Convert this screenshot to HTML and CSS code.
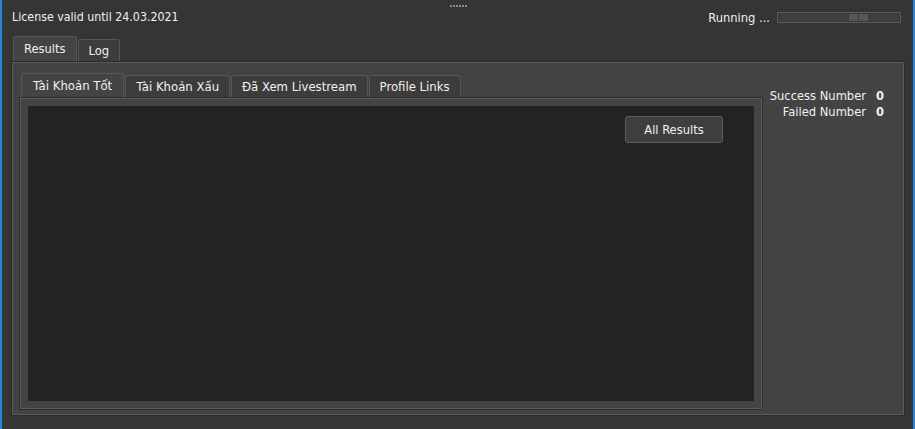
FILE: index.html
```html
<!DOCTYPE html>
<html lang="vi">

<head>
  <meta charset="UTF-8" />
  <title>Results</title>
  <link rel="stylesheet" href="styles.css">
</head>

<body>
  <div class="window">
    <div class="grip"></div>

    <div class="topbar">
      <span class="license">License valid until 24.03.2021</span>
      <div class="status">
        <span>Running ...</span>
        <div class="progress">
          <i></i><i></i><i></i><i></i><i></i><i></i><i></i><i class="on"></i><i class="on"></i><i></i><i></i><i></i>
        </div>
      </div>
    </div>

    <div class="tabs">
      <div class="tab active">Results</div>
      <div class="tab">Log</div>
    </div>

    <div class="panel">
      <div class="left">
        <div class="subtabs">
          <div class="subtab active">Tài Khoản Tốt</div>
          <div class="subtab">Tài Khoản Xấu</div>
          <div class="subtab">Đã Xem Livestream</div>
          <div class="subtab">Profile Links</div>
        </div>
        <div class="subpanel">
          <div class="results">
            <button class="btn">All Results</button>
          </div>
        </div>
      </div>

      <div class="stats">
        <div class="row"><span>Success Number</span><b>0</b></div>
        <div class="row"><span>Failed Number</span><b>0</b></div>
      </div>
    </div>
  </div>
</body>

</html>
```

FILE: styles.css
```css
* {
  box-sizing: border-box;
  margin: 0;
  padding: 0;
}

body {
  width: 915px;
  height: 429px;
  background: #353535;
  font-family: "DejaVu Sans Condensed", "DejaVu Sans", sans-serif;
  font-size: 12.8px;
  color: #f0f0f0;
  overflow: hidden;
}

.window {
  position: relative;
  height: 429px;
  border-left: 2px solid #2a84d8;
  border-right: 2px solid #2a84d8;
  padding: 0 9px 0 10px;
  display: flex;
  flex-direction: column;
}

.grip {
  position: absolute;
  top: 5px;
  left: 448px;
  width: 17px;
  height: 2px;
  background: repeating-linear-gradient(90deg, #8a8a8a 0 2px, transparent 2px 3px);
}

.topbar {
  height: 31px;
  display: flex;
  justify-content: space-between;
  align-items: center;
  padding: 3px 3px 0 0;
}

.license {
  font-size: 12.3px;
}

.status {
  display: flex;
  align-items: center;
  gap: 7px;
}

.progress {
  width: 124px;
  height: 11px;
  border: 1px solid #5a5a5a;
  background: #3a3a3a;
  display: flex;
  gap: 1px;
  padding: 1px 2px;
}

.progress i {
  flex: 1;
  background: #3f3f3f;
}

.progress i.on {
  background: #575757;
}

.tabs {
  display: flex;
  align-items: flex-end;
  height: 31px;
  padding-left: 1px;
}

.tab {
  height: 23px;
  padding: 0 10px;
  line-height: 22px;
  background: #3c3c3c;
  border: 1px solid #575757;
  border-bottom: none;
  border-radius: 3px 3px 0 0;
  margin-right: 1px;
}

.tab.active {
  height: 26px;
  line-height: 24px;
  background: #444;
  padding: 0 10px;
}

.panel {
  height: 353px;
  width: 892px;
  background: #434343;
  border: 1px solid #5b5b5b;
  box-shadow: 0 0 0 1px #2a2a2a;
  display: flex;
  padding: 10px 0 5px 7px;
}

.left {
  width: 742px;
  display: flex;
  flex-direction: column;
}

.subtabs {
  display: flex;
  align-items: flex-end;
  height: 25px;
  padding-left: 1px;
}

.subtab {
  height: 23px;
  line-height: 22px;
  padding: 0 10px;
  font-size: 13px;
  background: #3c3c3c;
  border: 1px solid #575757;
  border-bottom: none;
  border-radius: 3px 3px 0 0;
  margin-right: 1px;
}

.subtab.active {
  height: 25px;
  line-height: 23px;
  background: #444;
  padding: 0 11px;
}

.subpanel {
  flex: 1;
  background: #444;
  border: 1px solid #5b5b5b;
  box-shadow: 0 0 0 1px #2e2e2e;
  padding: 7px;
}

.results {
  height: 100%;
  background: #232323;
  display: flex;
  justify-content: flex-end;
  align-items: flex-start;
  padding: 10px 31px 0 0;
}

.btn {
  width: 98px;
  height: 27px;
  font: inherit;
  color: #f0f0f0;
  background: #3e3e3e;
  border: 1px solid #5c5c5c;
  border-radius: 3px;
}

.stats {
  flex: 1;
  padding: 15px 19px 0 0;
  display: flex;
  flex-direction: column;
  align-items: flex-end;
}

.row {
  display: flex;
  gap: 10px;
  line-height: 16px;
}

.row b {
  width: 8px;
}
```
